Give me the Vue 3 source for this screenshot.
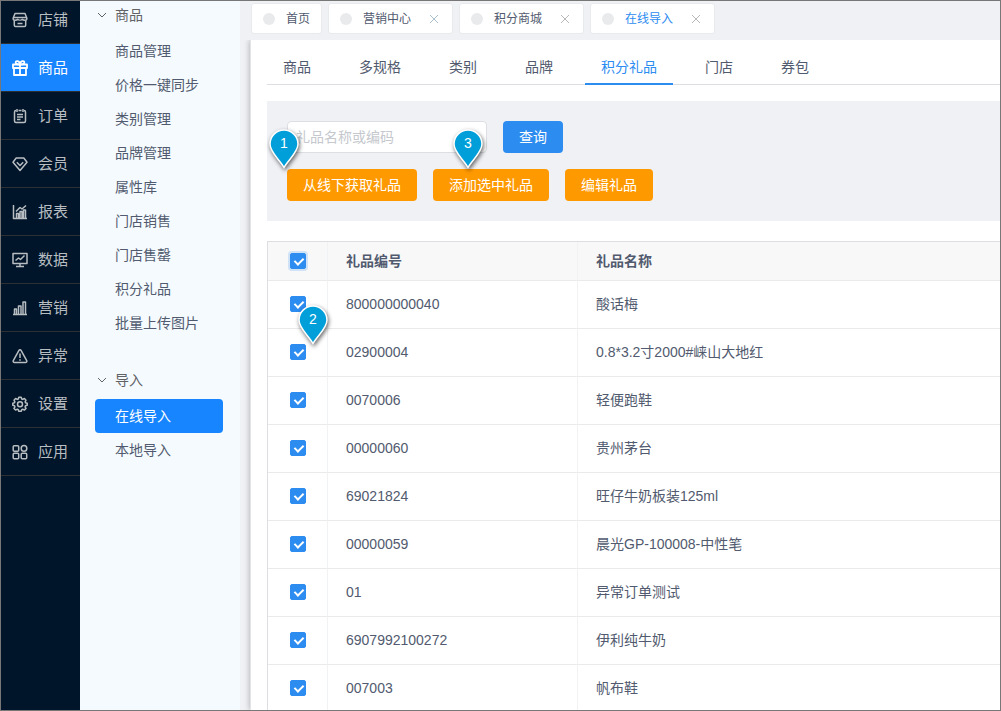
<script setup>
import { ref } from 'vue'

const modules = [
  { name: '店铺', icon: 'shop' },
  { name: '商品', icon: 'gift' },
  { name: '订单', icon: 'order' },
  { name: '会员', icon: 'member' },
  { name: '报表', icon: 'report' },
  { name: '数据', icon: 'data' },
  { name: '营销', icon: 'market' },
  { name: '异常', icon: 'alert' },
  { name: '设置', icon: 'gear' },
  { name: '应用', icon: 'apps' }
]
const activeModule = ref('商品')

const groups = [
  {
    title: '商品',
    items: ['商品管理', '价格一键同步', '类别管理', '品牌管理', '属性库', '门店销售', '门店售罄', '积分礼品', '批量上传图片']
  },
  { title: '导入', items: ['在线导入', '本地导入'] }
]
const activeItem = ref('在线导入')

const pages = [
  { name: '首页', closable: false },
  { name: '营销中心', closable: true, tint: true },
  { name: '积分商城', closable: true },
  { name: '在线导入', closable: true }
]
const activePage = ref('在线导入')

const tabs = ['商品', '多规格', '类别', '品牌', '积分礼品', '门店', '券包']
const activeTab = ref('积分礼品')

const keyword = ref('')
const allChecked = ref(true)
const rows = ref([
  { code: '800000000040', name: '酸话梅', checked: true },
  { code: '02900004', name: '0.8*3.2寸2000#崃山大地红', checked: true },
  { code: '0070006', name: '轻便跑鞋', checked: true },
  { code: '00000060', name: '贵州茅台', checked: true },
  { code: '69021824', name: '旺仔牛奶板装125ml', checked: true },
  { code: '00000059', name: '晨光GP-100008-中性笔', checked: true },
  { code: '01', name: '异常订单测试', checked: true },
  { code: '6907992100272', name: '伊利纯牛奶', checked: true },
  { code: '007003', name: '帆布鞋', checked: true }
])

function toggleAll() {
  rows.value.forEach((row) => { row.checked = allChecked.value })
}
</script>

<template>
  <div class="app">
    <nav class="modules" aria-label="主菜单">
      <a
        v-for="m in modules"
        :key="m.name"
        href="#"
        class="module"
        :class="{ active: m.name === activeModule }"
        @click.prevent="activeModule = m.name"
      >
        <svg class="module-icon" viewBox="0 0 16 16" aria-hidden="true">
          <g v-if="m.icon === 'shop'">
            <path d="M3 1.500h10l1.800 4.500v1.200c0 1-3 1.500-4.500 0-1.200 1.200-3.400 1.200-4.600 0-1.500 1.500-4.500 1-4.500 0V6z" />
            <path d="M1.500 5.500h13M2.300 8.500v4.800c0 .7.500 1.200 1.200 1.200h9c.7 0 1.200-.5 1.200-1.200V8.500M5.500 11.500h5" />
          </g>
          <g v-else-if="m.icon === 'gift'" class="bold">
            <path d="M1 4.500h14v3.500H1zM2 8v7h12V8M8 4.500V15" />
            <path d="M8 4.500C6 4.500 3.700 4 3.700 2.500 3.700 0.300 7.500 0.300 8 4.500 8.500 0.300 12.300 0.300 12.300 2.500 12.300 4 10 4.500 8 4.500" />
          </g>
          <g v-else-if="m.icon === 'order'">
            <path d="M4 2.500c-1 0-1.500.5-1.500 1.500v9c0 1 .5 1.500 1.500 1.500h8c1 0 1.500-.5 1.500-1.500V4c0-1-.5-1.500-1.500-1.500M6.500 2.500h3M5 1v3M11 1v3M5 6.500h6M5 9h6M5 11.500h3.500" />
          </g>
          <g v-else-if="m.icon === 'member'">
            <path d="M4.200 2h7.600L15 6.300 8 14.500 1 6.300z" />
            <path d="M4.800 6.300L8 9.500l3.200-3.200" />
          </g>
          <g v-else-if="m.icon === 'report'">
            <path d="M1.500 1v13.500H15M4.500 14V9.500h2V14M8 14V7.500h2V14M11.500 14V6h2V14M4 7.500l4-4 2 1.500 4-3.500" />
          </g>
          <g v-else-if="m.icon === 'data'">
            <path d="M1 1.500h14v10H1zM8 11.500v3M4 14.500h8M3.500 8.500L6.500 6l2 1.500 4-4" />
          </g>
          <g v-else-if="m.icon === 'market'">
            <path d="M1 14.500h14M2.500 14.500V9h2v5.500M6.500 14.500V6h2.500v8.500M11 14.500V2h2.500v12.500" />
          </g>
          <g v-else-if="m.icon === 'alert'">
            <path d="M8 1.800c.5 0 .9.300 1.200.800l5.500 10c.5 1-.1 1.900-1.200 1.900h-11c-1.100 0-1.700-.9-1.200-1.900l5.500-10c.3-.5.700-.8 1.200-.8zM8 5.500v4.500M8 11.200v1.500" />
          </g>
          <g v-else-if="m.icon === 'gear'">
            <path d="M6.800 1.200h2.400l.5 1.800 1 .4 1.700-.9 1.600 1.700-.9 1.600.4 1 1.700.5v1.900l-1.700.6-.4 1 .9 1.600-1.700 1.700-1.600-.9-1 .4-.5 1.700H6.800l-.5-1.700-1-.4-1.700.9L2 12.400l.9-1.600-.4-1L.8 9.200V7.300l1.700-.5.4-1L2 4.200l1.600-1.700 1.700.9 1-.4z" />
            <circle cx="8" cy="8.200" r="2.500" />
          </g>
          <g v-else>
            <rect x="1.200" y="1.700" width="5.500" height="5.500" rx="1" />
            <rect x="1.200" y="9.200" width="5.500" height="5.500" rx="1" />
            <rect x="9.200" y="9.200" width="5.500" height="5.500" rx="1" />
            <circle cx="12" cy="4.400" r="2.800" />
          </g>
        </svg>
        <span>{{ m.name }}</span>
      </a>
    </nav>

    <aside class="submenu">
      <section v-for="g in groups" :key="g.title" class="group">
        <button type="button" class="group-title">
          <svg class="chevron" viewBox="0 0 10 10" aria-hidden="true"><path d="M1 3l4 4 4-4" /></svg>
          {{ g.title }}
        </button>
        <a
          v-for="item in g.items"
          :key="item"
          href="#"
          class="item"
          :class="{ active: item === activeItem }"
          @click.prevent="activeItem = item"
        >{{ item }}</a>
      </section>
    </aside>

    <main class="main">
      <div class="pages">
        <div v-for="p in pages" :key="p.name" class="page" :class="{ active: p.name === activePage }">
          <a href="#" class="page-link" @click.prevent="activePage = p.name"><i class="dot"></i>{{ p.name }}</a>
          <button v-if="p.closable" type="button" class="close" :class="{ tint: p.tint }" :aria-label="'关闭' + p.name">
            <svg viewBox="0 0 10 10" aria-hidden="true"><path d="M1 1l8 8M9 1l-8 8" /></svg>
          </button>
        </div>
      </div>

      <div class="content">
        <div class="tabs" role="tablist">
          <button
            v-for="t in tabs"
            :key="t"
            type="button"
            role="tab"
            class="tab"
            :class="{ active: t === activeTab }"
            :aria-selected="t === activeTab"
            @click="activeTab = t"
          >{{ t }}</button>
        </div>

        <form class="filter" @submit.prevent>
          <div class="filter-row">
            <input v-model="keyword" class="keyword" type="text" placeholder="礼品名称或编码" aria-label="礼品名称或编码">
            <button type="submit" class="btn primary">查询</button>
          </div>
          <div class="filter-row">
            <div class="marked">
              <button type="button" class="btn warning">从线下获取礼品</button>
              <span class="pin pin-fetch">
                <svg viewBox="0 0 36 46" aria-hidden="true"><path d="M18 40.500C14 33 4 25.500 4 17a14 14 0 0 1 28 0C32 25.500 22 33 18 40.500z" /></svg>
                <b>1</b>
              </span>
            </div>
            <div class="marked">
              <button type="button" class="btn warning">添加选中礼品</button>
              <span class="pin pin-add">
                <svg viewBox="0 0 36 46" aria-hidden="true"><path d="M18 40.500C14 33 4 25.500 4 17a14 14 0 0 1 28 0C32 25.500 22 33 18 40.500z" /></svg>
                <b>3</b>
              </span>
            </div>
            <button type="button" class="btn warning">编辑礼品</button>
          </div>
        </form>

        <table class="gifts">
          <thead>
            <tr>
              <th class="pick"><input v-model="allChecked" class="check ring" type="checkbox" aria-label="全选" @change="toggleAll"></th>
              <th class="code">礼品编号</th>
              <th>礼品名称</th>
            </tr>
          </thead>
          <tbody>
            <tr v-for="(row, i) in rows" :key="row.code">
              <td class="pick">
                <input v-model="row.checked" class="check" type="checkbox" :aria-label="row.name">
                <span v-if="i === 0" class="pin pin-pick">
                  <svg viewBox="0 0 36 46" aria-hidden="true"><path d="M18 40.500C14 33 4 25.500 4 17a14 14 0 0 1 28 0C32 25.500 22 33 18 40.500z" /></svg>
                  <b>2</b>
                </span>
              </td>
              <td>{{ row.code }}</td>
              <td>{{ row.name }}</td>
            </tr>
          </tbody>
        </table>
      </div>
    </main>
  </div>
</template>

<style>
body {
  margin: 0;
}
</style>

<style scoped>
.app,
.app * {
  box-sizing: border-box;
}

.app {
  display: flex;
  height: 100vh;
  overflow: hidden;
  border: 1px solid #777;
  background: #f0f1f5;
  color: #515a6e;
  font: 14px/20px "Liberation Sans", "Noto Sans CJK SC", sans-serif;
}

a {
  color: inherit;
  text-decoration: none;
}

button {
  margin: 0;
  padding: 0;
  border: 0;
  background: none;
  color: inherit;
  font: inherit;
  cursor: pointer;
}

svg {
  display: block;
  fill: none;
  stroke: currentColor;
}

.modules {
  flex: none;
  width: 79px;
  overflow: hidden;
  background: #001529;
}

.module {
  display: flex;
  align-items: center;
  gap: 10px;
  height: 48px;
  padding-left: 11px;
  border-bottom: 1px solid #2d3033;
  color: #b8bdc2;
  font-size: 15px;
}

.module:first-child {
  margin-top: -5px;
}

.module.active {
  background: #1785ff;
  color: #fff;
}

.module-icon {
  width: 16px;
  height: 16px;
  stroke-width: 1.5;
  stroke-linejoin: round;
}

.bold {
  stroke-width: 1.8;
}

.submenu {
  position: relative;
  z-index: 2;
  flex: none;
  display: flex;
  flex-direction: column;
  gap: 21px;
  width: 160px;
  padding: 0 17px 0 15px;
  background: #f5faff;
}

.group:first-child {
  margin-top: -5px;
}

.group-title {
  display: flex;
  align-items: center;
  gap: 8px;
  height: 38px;
  padding-left: 2px;
  color: #606266;
}

.chevron {
  width: 10px;
  height: 10px;
}

.item {
  display: block;
  height: 34px;
  padding-left: 20px;
  border-radius: 4px;
  line-height: 34px;
}

.item.active {
  background: #1785ff;
  color: #fff;
}

.main {
  flex: 1;
  display: flex;
  flex-direction: column;
  min-width: 0;
}

.pages {
  position: relative;
  z-index: 1;
  display: flex;
  gap: 6px;
  height: 39px;
  padding: 2px 11px 0;
  background: #f0f1f5;
}

.page {
  display: flex;
  align-items: center;
  gap: 18px;
  height: 31px;
  padding: 0 11px;
  border: 1px solid #e8eaec;
  border-radius: 3px;
  background: #fff;
  font-size: 12px;
}

.page.active {
  color: #2d8cf0;
}

.page-link {
  display: flex;
  align-items: center;
  gap: 11px;
}

.dot {
  width: 12px;
  height: 12px;
  border-radius: 50%;
  background: #e8eaec;
}

.close {
  width: 10px;
  margin-right: 2px;
  color: #b8b8b8;
}

.close.tint {
  color: #a9c0cc;
}

.content {
  flex: 1;
  min-height: 0;
  margin-left: 10px;
  padding: 9px 0 0 16px;
  border-left: 1px solid #e3e4e8;
  background: #fff;
  box-shadow: 0 0 6px rgba(0, 0, 0, 0.3);
}

.tabs {
  display: flex;
  gap: 16px;
  height: 36px;
  box-shadow: inset 0 -1px #dcdee2;
}

.tab {
  padding: 2px 16px 0;
  border-bottom: 2px solid transparent;
}

.tab.active {
  border-bottom-color: #2d8cf0;
  color: #2d8cf0;
}

.filter {
  display: flex;
  flex-direction: column;
  gap: 16px;
  margin-top: 16px;
  padding: 20px;
  background: #f0f1f5;
}

.filter-row {
  display: flex;
  gap: 16px;
}

.keyword {
  width: 200px;
  height: 32px;
  margin: 0;
  padding: 0 8px;
  border: 1px solid #dcdee2;
  border-radius: 4px;
  outline: none;
  background: #fff;
  color: #515a6e;
  font: inherit;
}

.keyword::placeholder {
  color: #c5c8ce;
}

.btn {
  height: 32px;
  padding: 0 16px;
  border-radius: 4px;
  color: #fff;
}

.primary {
  background: #2d8cf0;
}

.warning {
  background: #f90;
}

.marked {
  position: relative;
}

.pin {
  position: absolute;
  z-index: 3;
  width: 36px;
  height: 46px;
  color: #fff;
  pointer-events: none;
}

.pin svg {
  width: 36px;
  height: 46px;
  fill: #009fda;
  stroke: #fff;
  stroke-width: 1.5;
  filter: drop-shadow(1px 2px 2px rgba(0, 0, 0, 0.6));
}

.pin b {
  position: absolute;
  inset: 6px 0 auto;
  font-weight: 400;
  line-height: 20px;
  text-align: center;
}

.pin-fetch {
  bottom: 28px;
  left: -21px;
}

.pin-add {
  bottom: 28px;
  left: 17px;
}

.pin-pick {
  top: 22px;
  left: 27px;
}

.gifts {
  width: 100%;
  margin-top: 20px;
  border-top: 1px solid #dcdee2;
  border-left: 1px solid #dcdee2;
  border-spacing: 0;
  table-layout: fixed;
}

.gifts th,
.gifts td {
  position: relative;
  height: 48px;
  padding: 0 18px 2px;
  border-right: 1px solid #f0f2f4;
  border-bottom: 1px solid #e8eaec;
  text-align: left;
}

.gifts th {
  height: 39px;
  padding-bottom: 0;
  background: #f8f8f9;
}

.gifts th:last-child,
.gifts td:last-child {
  border-right: 0;
}

.gifts .pick {
  width: 60px;
  padding-right: 0;
  padding-left: 22px;
}

.gifts .code {
  width: 250px;
}

.check {
  appearance: none;
  display: block;
  position: relative;
  width: 16px;
  height: 16px;
  margin: 0;
  border: 1px solid #dcdee2;
  border-radius: 2px;
  background: #fff;
}

.check:checked {
  border-color: #2d8cf0;
  background: #2d8cf0;
}

.check:checked::after {
  content: "";
  position: absolute;
  top: 2px;
  left: 5px;
  width: 4px;
  height: 7px;
  border: solid #fff;
  border-width: 0 2px 2px 0;
  transform: rotate(45deg);
}

.ring {
  box-shadow: 0 0 0 2px rgba(45, 140, 240, 0.2);
}
</style>
